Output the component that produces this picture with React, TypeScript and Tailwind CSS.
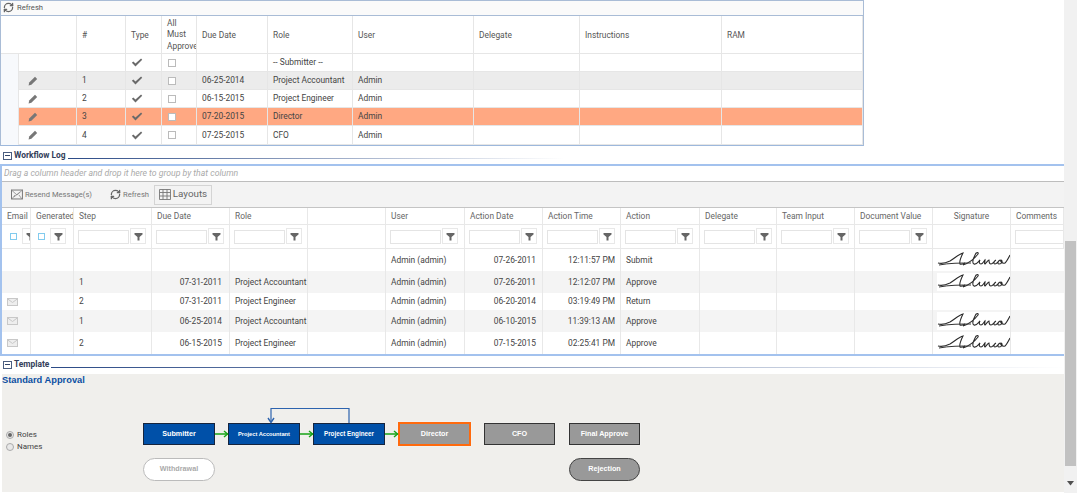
import { RefreshCw } from 'lucide-react';
import type { ReactNode } from 'react';

const TOP_COLS =
  'grid grid-cols-[18px_58px_49px_36px_35px_71px_85px_121px_106px_142px_141px]';
const LOG_COLS =
  'grid grid-cols-[29px_43px_78px_78px_78px_78px_79px_78px_78px_79px_77px_78px_78px_78px_53px]';

const STEPS = [
  { n: '', due: '', role: '-- Submitter --', user: '', bg: 'bg-white', h: 'h-[18px]', edit: false },
  { n: '1', due: '06-25-2014', role: 'Project Accountant', user: 'Admin', bg: 'bg-[#ececec]', h: 'h-[18px]', edit: true },
  { n: '2', due: '06-15-2015', role: 'Project Engineer', user: 'Admin', bg: 'bg-white', h: 'h-[18px]', edit: true },
  { n: '3', due: '07-20-2015', role: 'Director', user: 'Admin', bg: 'bg-[#ffa882]', h: 'h-[18px]', edit: true },
  { n: '4', due: '07-25-2015', role: 'CFO', user: 'Admin', bg: 'bg-white', h: 'h-[19px]', edit: true },
];

const LOG_ROWS = [
  { step: '', due: '', role: '', date: '07-26-2011', time: '12:11:57 PM', action: 'Submit', sig: true, mail: false, bg: 'bg-white', h: 'h-[22px]' },
  { step: '1', due: '07-31-2011', role: 'Project Accountant', date: '07-26-2011', time: '12:12:07 PM', action: 'Approve', sig: true, mail: false, bg: 'bg-[#f4f4f4]', h: 'h-[22px]' },
  { step: '2', due: '07-31-2011', role: 'Project Engineer', date: '06-20-2014', time: '03:19:49 PM', action: 'Return', sig: false, mail: true, bg: 'bg-white', h: 'h-[17px]' },
  { step: '1', due: '06-25-2014', role: 'Project Accountant', date: '06-10-2015', time: '11:39:13 AM', action: 'Approve', sig: true, mail: true, bg: 'bg-[#f4f4f4]', h: 'h-[22px]' },
  { step: '2', due: '06-15-2015', role: 'Project Engineer', date: '07-15-2015', time: '02:25:41 PM', action: 'Approve', sig: true, mail: true, bg: 'bg-white', h: 'h-[22px]' },
];

function PencilIcon() {
  return (
    <svg width="10" height="10" viewBox="0 0 10 10" aria-hidden="true">
      <path d="M7 .8l2.2 2.2-5.8 5.8L.6 9.4l.6-2.8z" fill="#777" />
    </svg>
  );
}

function CheckIcon() {
  return (
    <svg width="12" height="9" viewBox="0 0 13 10" aria-hidden="true">
      <path d="M.8 5.2l1.6-1.4 2.4 2.4L11 .6l1.3 1.3L4.8 9.4z" fill="#6a6a6a" />
    </svg>
  );
}

function FunnelIcon() {
  return (
    <svg width="9" height="9" viewBox="0 0 9 9" aria-hidden="true">
      <path d="M.5 1h8v1.4L5.5 5v3.4h-2V5L.5 2.4z" fill="#666" />
    </svg>
  );
}

function MailIcon() {
  return (
    <svg width="11" height="8" viewBox="0 0 11 8" aria-hidden="true">
      <rect x="0.5" y="0.5" width="10" height="7" fill="#eee" stroke="#c8c8c8" />
      <path d="M.5.8L5.5 4.5l5-3.7" fill="none" stroke="#c8c8c8" />
    </svg>
  );
}

function GridIcon() {
  return (
    <svg width="12" height="11" viewBox="0 0 12 11" aria-hidden="true">
      <path
        d="M.5.5h11v10H.5zM.5 3.5h11M.5 7h11M4 .5v10M8 .5v10"
        fill="none"
        stroke="#777"
        strokeWidth="0.9"
      />
    </svg>
  );
}

function MinusBox() {
  return (
    <span className="flex h-[8px] w-[9px] shrink-0 items-center justify-center border border-[#4a5d80] bg-white">
      <span className="h-px w-[5px] bg-[#33466a]" />
    </span>
  );
}

// scanned signature, cut off by the column edge
function Signature() {
  return (
    <svg width="73" height="17" viewBox="0 0 73 17" className="shrink-0 blur-[0.3px]" aria-hidden="true">
      <path
        d="M1 12C5 13 9 12 13 10 18 7 22 3 26 2 24 6 22 10 23 13 24 14 26 13 28 12M26 14C32 12 38 7 41 3 42 1 39 1 38 4 36 8 35 12 37 13 39 14 41 11 43 9 42 11 42 13 44 13 46 13 47 10 48 9 48 11 47 13 48 13 50 11 51 9 52 9 52 11 52 13 54 13 56 13 57 10 59 9 57 10 56 13 58 13 60 13 61 10 63 9 61 10 60 13 62 13 65 13 66 10 64 9 63 10 65 13 68 12 70 10 72 6 73 4"
        fill="none"
        stroke="#2b2b2b"
        strokeWidth="1.1"
      />
      <path d="M2 14C12 12 24 12 34 12" fill="none" stroke="#333" strokeWidth="1" />
    </svg>
  );
}

function TopCell({ children, className = '' }: { children?: ReactNode; className?: string }) {
  return (
    <div className={`flex items-center border-r border-b border-[#e6e6e6] pl-[5px] ${className}`}>
      {children}
    </div>
  );
}

function StepsGrid() {
  return (
    <section className="h-[146px] w-[864px] border-x border-b border-x-[#a9bcd6] border-b-[#9db8dc]">
      <div className="flex h-[16px] items-center gap-[3px] border-y border-[#a9bcd6] bg-[#fafafa] pb-px pl-[2px] text-[7.6px] text-[#555]">
        <RefreshCw size={11} strokeWidth={2.8} color="#666" />
        <span>Refresh</span>
      </div>
      <div className={`${TOP_COLS} h-[38px] text-[#555]`}>
        <TopCell className="col-span-2" />
        <TopCell className="pt-px">#</TopCell>
        <TopCell className="pt-px">Type</TopCell>
        <TopCell className="overflow-hidden pt-px leading-[11.5px] whitespace-nowrap">
          <span>
            All
            <br />
            Must
            <br />
            Approve
          </span>
        </TopCell>
        <TopCell className="pt-px">Due Date</TopCell>
        <TopCell className="pt-px">Role</TopCell>
        <TopCell className="pt-px">User</TopCell>
        <TopCell className="pt-px">Delegate</TopCell>
        <TopCell className="pt-px">Instructions</TopCell>
        <TopCell className="pt-px">RAM</TopCell>
      </div>
      {STEPS.map((s) => (
        <div key={s.n || 'submitter'} className={`${TOP_COLS} ${s.h} text-[#444]`}>
          <div className="border-r border-[#e6e6e6] bg-[#f7f9fc]" />
          <TopCell className={`${s.bg} !pl-[9px]`}>{s.edit && <PencilIcon />}</TopCell>
          <TopCell className={s.bg}>{s.n}</TopCell>
          <TopCell className={`${s.bg} !pl-[5px]`}>
            <CheckIcon />
          </TopCell>
          <TopCell className={`${s.bg} !pl-[6px]`}>
            <span className="h-[8px] w-[8px] border border-[#bbb] bg-white" />
          </TopCell>
          <TopCell className={s.bg}>{s.due}</TopCell>
          <TopCell className={`${s.bg} whitespace-nowrap`}>{s.role}</TopCell>
          <TopCell className={s.bg}>{s.user}</TopCell>
          <TopCell className={s.bg} />
          <TopCell className={s.bg} />
          <TopCell className={s.bg} />
        </div>
      ))}
    </section>
  );
}

function SectionTitle({ label, lineTo }: { label: string; lineTo: string }) {
  return (
    <div className="flex h-[11px] items-center gap-[2px] pl-[3px]">
      <MinusBox />
      <span className="text-[8.4px] leading-none font-bold text-[#33405a]">{label}</span>
      <span className={`mt-[6px] h-px bg-gradient-to-r from-[#2b4a86] to-transparent ${lineTo}`} />
    </div>
  );
}

function FilterBtn() {
  return (
    <span className="flex h-[16px] w-[16px] shrink-0 items-center justify-center border border-[#e8e8e8] bg-white">
      <FunnelIcon />
    </span>
  );
}

function FilterCell() {
  return (
    <div className="flex items-end gap-px overflow-hidden border-r border-b border-[#e8e8e8] pb-[4px] pl-[4px]">
      <span className="h-[14px] w-[51px] shrink-0 border border-[#e4e4e4] bg-white" />
      <FilterBtn />
    </div>
  );
}

function CheckFilter({ inset }: { inset: string }) {
  return (
    <div className={`flex items-end gap-[5px] overflow-hidden border-r border-b border-[#e8e8e8] pb-[4px] ${inset}`}>
      <span className="mb-[4px] h-[7px] w-[7px] shrink-0 border-[1.5px] border-[#82cbee] bg-white" />
      <FilterBtn />
    </div>
  );
}

function HeadCell({ children, center }: { children?: ReactNode; center?: boolean }) {
  return (
    <div
      className={`flex items-center overflow-hidden border-r border-b border-[#e8e8e8] pt-px whitespace-nowrap ${
        center ? 'justify-center' : 'pl-[5px]'
      }`}
    >
      {children}
    </div>
  );
}

function LogCell({
  children,
  right,
  className = '',
}: {
  children?: ReactNode;
  right?: boolean;
  className?: string;
}) {
  return (
    <div
      className={`flex items-center overflow-hidden border-r border-[#e8e8e8] whitespace-nowrap ${
        right ? 'justify-end pr-[6px]' : 'pl-[5px]'
      } ${className}`}
    >
      {children}
    </div>
  );
}

function LogGrid() {
  return (
    <section className="h-[192px] overflow-hidden border-t-2 border-b-2 border-l-2 border-[#a3c2ee]">
      <div className="flex h-[16px] items-center border-b border-[#bdbdbd] pl-[2px] text-[8.7px] text-[#aaa] italic">
        Drag a column header and drop it here to group by that column
      </div>
      <div className="flex h-[26px] items-center border-b border-[#c4c4c4] bg-[#f3f3f3] text-[7.6px] text-[#777]">
        <span className="ml-[9px] flex w-[81px] items-center gap-[2px] whitespace-nowrap">
          <svg width="12" height="11" viewBox="0 0 12 11" aria-hidden="true">
            <rect x="0.5" y="1" width="11" height="9" fill="none" stroke="#777" />
            <path d="M.5 1L6 6l5.5-5M1 10l3-4M11 10L8 6M3 8l6-5" fill="none" stroke="#888" strokeWidth="0.8" />
          </svg>
          Resend Message(s)
        </span>
        <span className="ml-[18px] flex items-center gap-[2px]">
          <RefreshCw size={11} strokeWidth={2.8} color="#666" />
          Refresh
        </span>
        <span className="ml-[5px] flex h-[20px] w-[58px] items-center justify-center gap-[2px] border border-[#d4d4d4] text-[9.8px] text-[#666]">
          <GridIcon />
          Layouts
        </span>
      </div>
      <div className={`${LOG_COLS} h-[17px] bg-white text-[#666]`}>
        <HeadCell>Email</HeadCell>
        <HeadCell>Generated</HeadCell>
        <HeadCell>Step</HeadCell>
        <HeadCell>Due Date</HeadCell>
        <HeadCell>Role</HeadCell>
        <HeadCell />
        <HeadCell>User</HeadCell>
        <HeadCell>Action Date</HeadCell>
        <HeadCell>Action Time</HeadCell>
        <HeadCell>Action</HeadCell>
        <HeadCell>Delegate</HeadCell>
        <HeadCell>Team Input</HeadCell>
        <HeadCell>Document Value</HeadCell>
        <HeadCell center>Signature</HeadCell>
        <HeadCell>Comments</HeadCell>
      </div>
      <div className={`${LOG_COLS} h-[24px] bg-white`}>
        <CheckFilter inset="pl-[8px]" />
        <CheckFilter inset="pl-[7px]" />
        <FilterCell />
        <FilterCell />
        <FilterCell />
        <div className="border-r border-b border-[#e8e8e8]" />
        <FilterCell />
        <FilterCell />
        <FilterCell />
        <FilterCell />
        <FilterCell />
        <FilterCell />
        <FilterCell />
        <div className="border-r border-b border-[#e8e8e8]" />
        <FilterCell />
      </div>
      {LOG_ROWS.map((r) => (
        <div key={r.date + r.time} className={`${LOG_COLS} ${r.h} ${r.bg} text-[#444]`}>
          <LogCell>{r.mail && <MailIcon />}</LogCell>
          <LogCell />
          <LogCell>{r.step}</LogCell>
          <LogCell right className="!pr-[7px]">
            {r.due}
          </LogCell>
          <LogCell>{r.role}</LogCell>
          <LogCell />
          <LogCell>Admin (admin)</LogCell>
          <LogCell right>{r.date}</LogCell>
          <LogCell right className="!pr-[5px]">
            {r.time}
          </LogCell>
          <LogCell>{r.action}</LogCell>
          <LogCell />
          <LogCell />
          <LogCell />
          <LogCell className="!pl-[4px]">
            {r.sig && (
              <span className="flex h-[18px] bg-white">
                <Signature />
              </span>
            )}
          </LogCell>
          <LogCell className="border-r-0" />
        </div>
      ))}
    </section>
  );
}

function Node({ label, className }: { label: string; className: string }) {
  return (
    <div
      className={`absolute flex h-[22px] w-[72px] items-center justify-center border font-['Liberation_Sans',sans-serif] font-bold whitespace-nowrap text-white shadow-[0_0_1px_#fff] ${className}`}
    >
      {label}
    </div>
  );
}

function Arrow({ x }: { x: number }) {
  return (
    <>
      <path d={`M${x} 34h13`} stroke="#16a316" strokeWidth="1.5" fill="none" />
      <path d={`M${x + 9} 31l3.5 3-3.5 3`} stroke="#16a316" strokeWidth="1.4" fill="none" />
    </>
  );
}

function Diagram() {
  return (
    <div className="relative h-[83px] w-[510px] text-[7.2px]">
      {/* connectors: canvas origin is the reference's (143,400) */}
      <svg className="absolute top-0 left-0 z-10" width="510" height="46" viewBox="0 0 510 46" aria-hidden="true">
        <Arrow x={72} />
        <Arrow x={157} />
        <Arrow x={242} />
        <path d="M206 23V8.5h-78V22" fill="none" stroke="#2d63ae" strokeWidth="1.2" />
        <path d="M125 18l3 4.5 3-4.5" fill="none" stroke="#2d63ae" strokeWidth="1.4" />
      </svg>
      <Node label="Submitter" className="top-[23px] left-0 border-[#16243c] bg-[#0050a8]" />
      <Node label="Project Accountant" className="top-[23px] left-[85px] border-[#16243c] bg-[#0050a8] text-[5.7px]" />
      <Node label="Project Engineer" className="top-[23px] left-[170px] border-[#16243c] bg-[#0050a8] text-[6.3px]" />
      <Node label="Director" className="top-[22px] left-[255px] !h-[24px] !w-[73px] border-2 border-[#ff6a0d] bg-[#999]" />
      <Node label="CFO" className="top-[23px] left-[341px] !w-[71px] border-[#333] bg-[#999]" />
      <Node label="Final Approve" className="top-[23px] left-[426px] !w-[71px] border-[#333] bg-[#999]" />
      <div className="absolute top-[58px] left-0 flex h-[23px] w-[72px] items-center justify-center rounded-full border border-[#bbb] bg-white font-['Liberation_Sans',sans-serif] font-bold text-[#aaa]">
        Withdrawal
      </div>
      <div className="absolute top-[58px] left-[426px] flex h-[23px] w-[71px] items-center justify-center rounded-full border border-[#444] bg-[#999] font-['Liberation_Sans',sans-serif] font-bold text-white">
        Rejection
      </div>
    </div>
  );
}

function TemplatePanel() {
  return (
    <section className="ml-[2px] h-[118px] bg-[#f0efec]">
      <div className="h-[26px] font-['Liberation_Sans',sans-serif] text-[9.3px] leading-[13px] font-bold text-[#0a4ea2]">
        Standard Approval
      </div>
      <div className="flex">
        <div className="flex w-[141px] flex-col gap-[4px] pt-[31px] pl-[4px] text-[8px] leading-[8px] text-[#444]">
          <label className="flex items-center gap-[3px]">
            <span className="flex h-[8px] w-[8px] items-center justify-center rounded-full border border-[#aaa] bg-[#e8e8e8]">
              <span className="h-[4px] w-[4px] rounded-full bg-[#666]" />
            </span>
            Roles
          </label>
          <label className="flex items-center gap-[3px]">
            <span className="h-[8px] w-[8px] rounded-full border border-[#aaa] bg-[#e8e8e8]" />
            Names
          </label>
        </div>
        <Diagram />
      </div>
    </section>
  );
}

function Scrollbar() {
  return (
    <aside className="flex h-full w-[13px] shrink-0 flex-col bg-[#f1f1f1] pl-px">
      <div className="mt-[241px] h-[225px] w-[11px] bg-[#c1c1c1]" />
      <svg className="mt-[15px] ml-[2px]" width="7" height="5" viewBox="0 0 7 5" aria-hidden="true">
        <path d="M0 0h7L3.5 4.5z" fill="#505050" />
      </svg>
    </aside>
  );
}

export default function App() {
  return (
    <div className="flex h-[493px] w-[1077px] overflow-hidden bg-white font-['Roboto',sans-serif] text-[8.4px]">
      <main className="flex w-[1064px] flex-col">
        <StepsGrid />
        <div className="mt-[4px]">
          <SectionTitle label="Workflow Log" lineTo="w-[496px]" />
        </div>
        <div className="mt-[3px]">
          <LogGrid />
        </div>
        <div className="mt-[3px]">
          <SectionTitle label="Template" lineTo="flex-1" />
        </div>
        <div className="mt-[4px]">
          <TemplatePanel />
        </div>
      </main>
      <Scrollbar />
    </div>
  );
}
